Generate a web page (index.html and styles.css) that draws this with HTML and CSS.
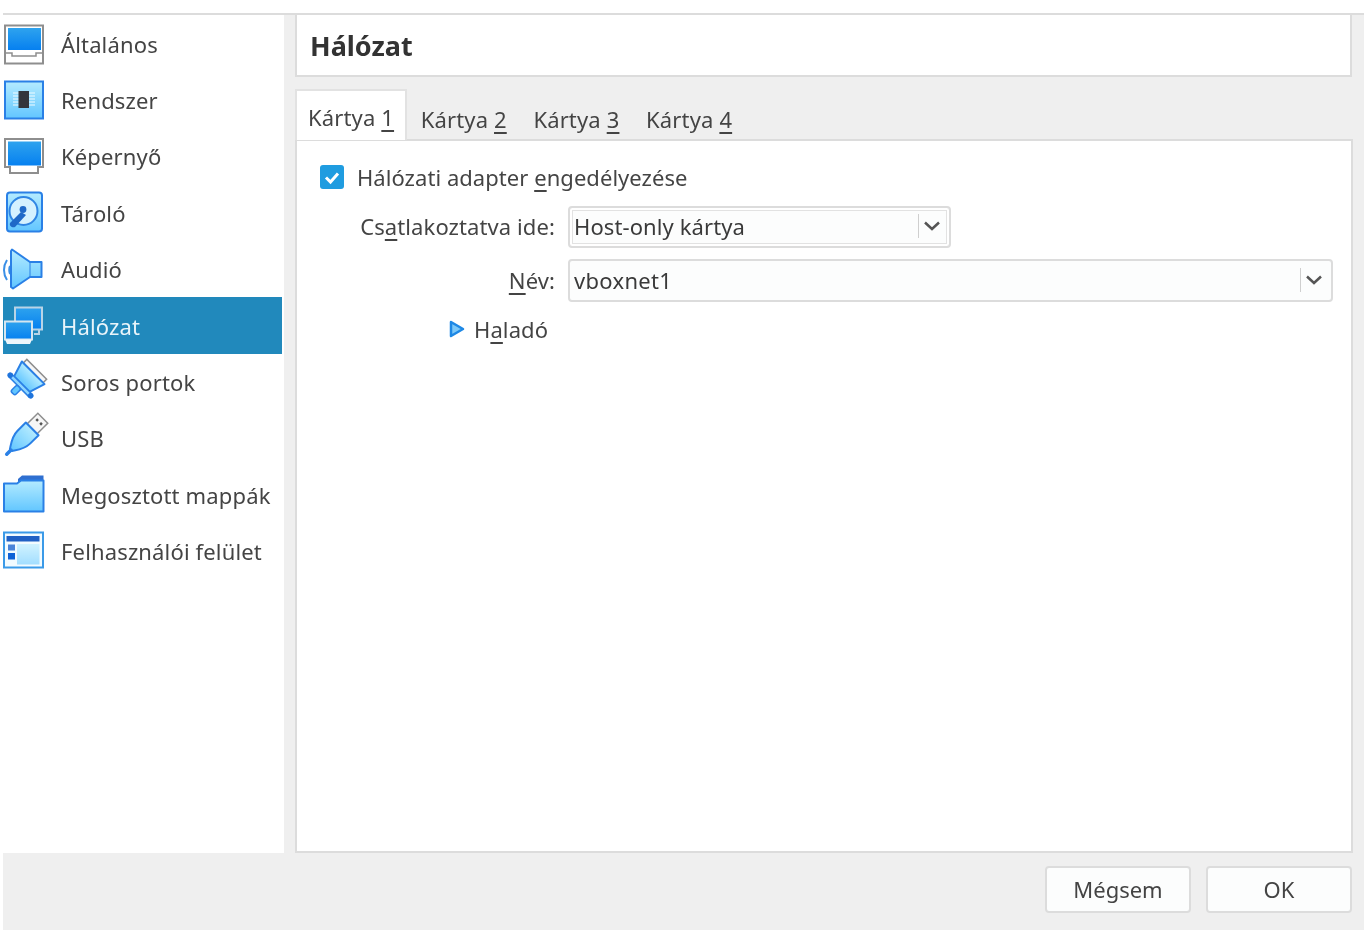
FILE: index.html
```html
<!DOCTYPE html>
<html>
<head>
<meta charset="utf-8">
<title>Hálózat</title>
<link rel="stylesheet" href="styles.css">
</head>
<body>
<svg class="defs">
	<defs>
		<linearGradient id="screen" x1="0" y1="0" x2="0" y2="1"><stop offset="0" stop-color="#2ea3ee"/><stop offset="1" stop-color="#0680f0"/></linearGradient>
		<linearGradient id="pale" x1="0" y1="0" x2="0" y2="1"><stop offset="0" stop-color="#b4ebff"/><stop offset="1" stop-color="#62c6ff"/></linearGradient>
	</defs>
</svg>
<div class="dialog">
	<div class="top">
		<ul class="sidebar">
			<li class="item">
				<svg class="icon" viewBox="0 0 44 46">
					<rect x="2" y="4.500" width="38" height="38" fill="#fff" stroke="#8e8e8e" stroke-width="2"/>
					<rect x="5" y="7" width="33" height="22" fill="url(#screen)"/>
					<path d="M2 32H9V35H33V32H40" fill="none" stroke="#8e8e8e" stroke-width="1.500"/>
				</svg>
				<span>Általános</span>
			</li>
			<li class="item">
				<svg class="icon" viewBox="0 0 44 46">
					<rect x="2" y="4.500" width="38" height="37" fill="url(#pale)" stroke="#2a80e6" stroke-width="2"/>
					<path d="M10 16H32M10 19H32M10 22H32M10 25H32M10 28H32" stroke="#f2fbff" stroke-width="1.200"/>
					<rect x="15.500" y="14" width="10.500" height="17" fill="#33363d"/>
				</svg>
				<span>Rendszer</span>
			</li>
			<li class="item">
				<svg class="icon" viewBox="0 0 44 46">
					<path d="M2 6H40V34H35V40H7V34H2Z" fill="#fff" stroke="#8e8e8e" stroke-width="2"/>
					<rect x="5" y="8.500" width="33" height="24" fill="url(#screen)"/>
				</svg>
				<span>Képernyő</span>
			</li>
			<li class="item">
				<svg class="icon" viewBox="0 0 44 46">
					<rect x="4" y="2.500" width="35" height="39" rx="3" fill="url(#pale)" stroke="#2a80e6" stroke-width="2"/>
					<circle cx="20.500" cy="21" r="14" fill="#d4f1ff" stroke="#2f86e4" stroke-width="2"/>
					<circle cx="20" cy="19.500" r="3.400" fill="#1f69c8"/>
					<path d="M18 22L23 25L12 37C9 38 6 36 7 33Z" fill="#1f69c8"/>
				</svg>
				<span>Tároló</span>
			</li>
			<li class="item">
				<svg class="icon" viewBox="0 0 44 46">
					<path d="M4 14C0 20 0 28 4 34" fill="none" stroke="#3a8fe6" stroke-width="2"/>
					<path d="M7 20C6 22 6 26 7 28" fill="none" stroke="#3a8fe6" stroke-width="2"/>
					<path d="M9 3.500L27 16H38.500V31H27L10 42.500L8 41V5Z" fill="url(#pale)" stroke="#2a80e6" stroke-width="2" stroke-linejoin="round"/>
					<path d="M27 16V31" stroke="#2a80e6" stroke-width="1"/>
				</svg>
				<span>Audió</span>
			</li>
			<li class="item selected">
				<svg class="icon" viewBox="0 0 44 46">
					<rect x="12" y="4.500" width="27" height="22" fill="url(#screen)" stroke="#b9d4e6" stroke-width="2"/>
					<path d="M36 27V31H31" fill="none" stroke="#b9d4e6" stroke-width="2"/>
					<rect x="2" y="18.500" width="27" height="18" fill="url(#screen)" stroke="#d5e6f0" stroke-width="2"/>
					<path d="M2 36.500H29L27 41H4Z" fill="#eef6fb"/>
				</svg>
				<span>Hálózat</span>
			</li>
			<li class="item">
				<svg class="icon" viewBox="0 0 44 46">
					<g transform="rotate(45 21 23)">
						<rect x="7" y="5" width="28" height="5" fill="#f6f6f6" stroke="#8e8e8e" stroke-width="1.500"/>
						<path d="M5 10H37L32 26H10Z" fill="url(#pale)" stroke="#2a80e6" stroke-width="2" stroke-linejoin="round"/>
						<rect x="7" y="26" width="28" height="4" fill="#8fd6ff" stroke="#2a80e6" stroke-width="1.500"/>
						<circle cx="6.500" cy="28" r="2.800" fill="#1f74dc"/>
						<circle cx="35.500" cy="28" r="2.800" fill="#1f74dc"/>
						<rect x="18" y="30" width="6" height="9" rx="2" fill="#62c6ff" stroke="#2a80e6" stroke-width="1.500"/>
					</g>
				</svg>
				<span>Soros portok</span>
			</li>
			<li class="item">
				<svg class="icon" viewBox="0 0 44 46">
					<g transform="rotate(45 20 23)">
						<rect x="13" y="-5" width="14" height="15" fill="#f6f6f6" stroke="#8e8e8e" stroke-width="1.500"/>
						<path d="M16 -1h2.500v2.500H16zM21.500 -1H24v2.500h-2.500z" fill="#555"/>
						<path d="M11 10H29V22C29 30 24 36 21.500 40H18.500C16 36 11 30 11 22Z" fill="url(#pale)" stroke="#2a80e6" stroke-width="2" stroke-linejoin="round"/>
						<path d="M20 40V46" stroke="#2a80e6" stroke-width="3.500" stroke-linecap="round"/>
					</g>
				</svg>
				<span>USB</span>
			</li>
			<li class="item">
				<svg class="icon" viewBox="0 0 44 46">
					<path d="M15 7L19 3.500H40.500V12H15Z" fill="#2f6fd0"/>
					<path d="M1 11.500H14L18 8.500H40.500V39.500H1Z" fill="url(#pale)" stroke="#2a80e6" stroke-width="2" stroke-linejoin="round"/>
				</svg>
				<span>Megosztott mappák</span>
			</li>
			<li class="item">
				<svg class="icon" viewBox="0 0 44 46">
					<rect x="1" y="4.500" width="39" height="35" fill="#f2fbff" stroke="#3a9ae8" stroke-width="2"/>
					<rect x="3.500" y="8" width="33" height="5.500" fill="#2060c4"/>
					<rect x="14" y="16" width="22.500" height="20.500" fill="url(#pale)" opacity=".55"/>
					<rect x="5" y="16.500" width="7" height="6" fill="#4b84d8"/>
					<rect x="5" y="25" width="7" height="6.500" fill="#0f62d6"/>
				</svg>
				<span>Felhasználói felület</span>
			</li>
		</ul>
		<div class="main">
			<div class="header">Hálózat</div>
			<div class="tabs">
				<div class="tab active">Kártya <u>1</u></div>
				<div class="tab">Kártya <u>2</u></div>
				<div class="tab">Kártya <u>3</u></div>
				<div class="tab">Kártya <u>4</u></div>
			</div>
			<div class="panel">
				<div class="check-row">
					<span class="checkbox"><svg viewBox="0 0 24 24" width="24" height="24"><path d="M6 12.500L10.500 17L18 8.500" fill="none" stroke="#fff" stroke-width="3"/></svg></span>
					<span>Hálózati adapter <u>e</u>ngedélyezése</span>
				</div>
				<div class="form">
					<label>Cs<u>a</u>tlakoztatva ide:</label>
					<div class="combo short">
						<span class="combo-text">Host-only kártya</span>
						<span class="combo-btn"><svg viewBox="0 0 16 10" width="16" height="10"><path d="M1 1.500L8 8L15 1.500" fill="none" stroke="#555" stroke-width="2.500"/></svg></span>
					</div>
					<label><u>N</u>év:</label>
					<div class="combo">
						<span class="combo-text wide">vboxnet1</span>
						<span class="combo-btn"><svg viewBox="0 0 16 10" width="16" height="10"><path d="M1 1.500L8 8L15 1.500" fill="none" stroke="#555" stroke-width="2.500"/></svg></span>
					</div>
				</div>
				<div class="advanced">
					<svg viewBox="0 0 16 18" width="16" height="18"><path d="M2 2L14 9L2 16Z" fill="#7cc8f8" stroke="#1e88e5" stroke-width="2.500" stroke-linejoin="round"/></svg>
					<span>H<u>a</u>ladó</span>
				</div>
			</div>
		</div>
	</div>
	<div class="footer">
		<button class="btn">Mégsem</button>
		<button class="btn">OK</button>
	</div>
</div>
</body>
</html>
```

FILE: styles.css
```css
* {
	box-sizing: border-box;
}

html, body {
	margin: 0;
	height: 100%;
	background: #fff;
	overflow: hidden;
}

body {
	padding: 13px 0 2px 3px;
	font-family: "Noto Sans", sans-serif;
	font-size: 22px;
	color: #444;
}

.defs {
	display: block;
	width: 0;
	height: 0;
}

.dialog {
	display: flex;
	flex-direction: column;
	height: 917px;
	background: #efefef;
	border-top: 2px solid #dcdcdc;
	filter: blur(0.6px);
}

.top {
	display: flex;
	flex: 1;
	min-height: 0;
}

u {
	text-decoration-thickness: 2px;
	text-underline-offset: 4px;
}

/* left list */
.sidebar {
	list-style: none;
	margin: 0;
	padding: 0.4px 0 0;
	width: 281px;
	background: #fff;
}

.item {
	display: flex;
	align-items: center;
	height: 56.4px;
	width: 279px;
	white-space: nowrap;
	letter-spacing: 0.15px;
}

.item.selected {
	background: #2189bc;
	color: #e8f4fa;
}

.icon {
	width: 44px;
	height: 46px;
	flex: none;
	margin-right: 14px;
	overflow: visible;
}

/* right side */
.main {
	width: 1058px;
	margin-left: 11px;
	display: flex;
	flex-direction: column;
}

.header {
	height: 62px;
	flex: none;
	background: #fff;
	border: 2px solid #dcdcdc;
	border-top: none;
	margin-right: 1px;
	padding-left: 13px;
	font-size: 27px;
	font-weight: 700;
	color: #333;
	display: flex;
	align-items: center;
}

.tabs {
	display: flex;
	align-items: flex-end;
	height: 51px;
	flex: none;
	margin-top: 12px;
	margin-bottom: -1px;
	position: relative;
	z-index: 1;
}

.tab {
	width: 112.7px;
	height: 49px;
	padding-left: 13px;
	line-height: 56px;
	white-space: nowrap;
	letter-spacing: 0.15px;
}

.tab.active {
	height: 51px;
	width: 112px;
	line-height: 52px;
	background: #fff;
	border: 2px solid #e2e2e2;
	border-bottom: none;
	padding-left: 11px;
	margin-right: 0.7px;
}

.panel {
	flex: 1;
	background: #fff;
	border: 2px solid #dcdcdc;
	padding: 24px 0 0 23px;
}

.check-row {
	display: flex;
	align-items: center;
	height: 24px;
	white-space: nowrap;
	letter-spacing: 0.05px;
}

.checkbox {
	width: 24px;
	height: 24px;
	margin-right: 13px;
	border-radius: 3px;
	background: #1f9ce0;
	flex: none;
}

.checkbox svg {
	display: block;
}

.form {
	display: grid;
	grid-template-columns: 235px 765px;
	column-gap: 13px;
	row-gap: 11px;
	align-items: center;
	margin-top: 17px;
}

.form label {
	text-align: right;
	white-space: nowrap;
	letter-spacing: 0.1px;
	padding-bottom: 2px;
}

.combo {
	display: flex;
	align-items: center;
	height: 43px;
	background: #fcfdfd;
	border: 2px solid #dcdcdc;
	border-radius: 4px;
	padding: 0 0 2px 4px;
	color: #3a3a3a;
}

.combo.short {
	width: 383px;
	height: 42px;
	box-shadow: inset 0 0 0 2px #fff, inset 0 0 0 3px #e2e2e2;
}

.combo-text {
	flex: 1;
	letter-spacing: 0.1px;
}

.combo-text.wide {
	letter-spacing: 0.3px;
}

.combo-btn {
	display: flex;
	align-items: center;
	justify-content: center;
	height: 24px;
	width: 26px;
	margin-right: 5px;
	border-left: 1px solid #cfcfcf;
}

.advanced {
	display: flex;
	align-items: center;
	gap: 9px;
	margin: 12px 0 0 129px;
	letter-spacing: 0.1px;
}

.footer {
	display: flex;
	justify-content: flex-end;
	gap: 15px;
	height: 77px;
	flex: none;
	padding: 13px 12px 0 0;
}

.btn {
	width: 146px;
	height: 47px;
	background: #fcfdfd;
	border: 2px solid #dcdcdc;
	border-radius: 4px;
	font: inherit;
	color: #444;
	padding: 0 0 2px;
}
```
